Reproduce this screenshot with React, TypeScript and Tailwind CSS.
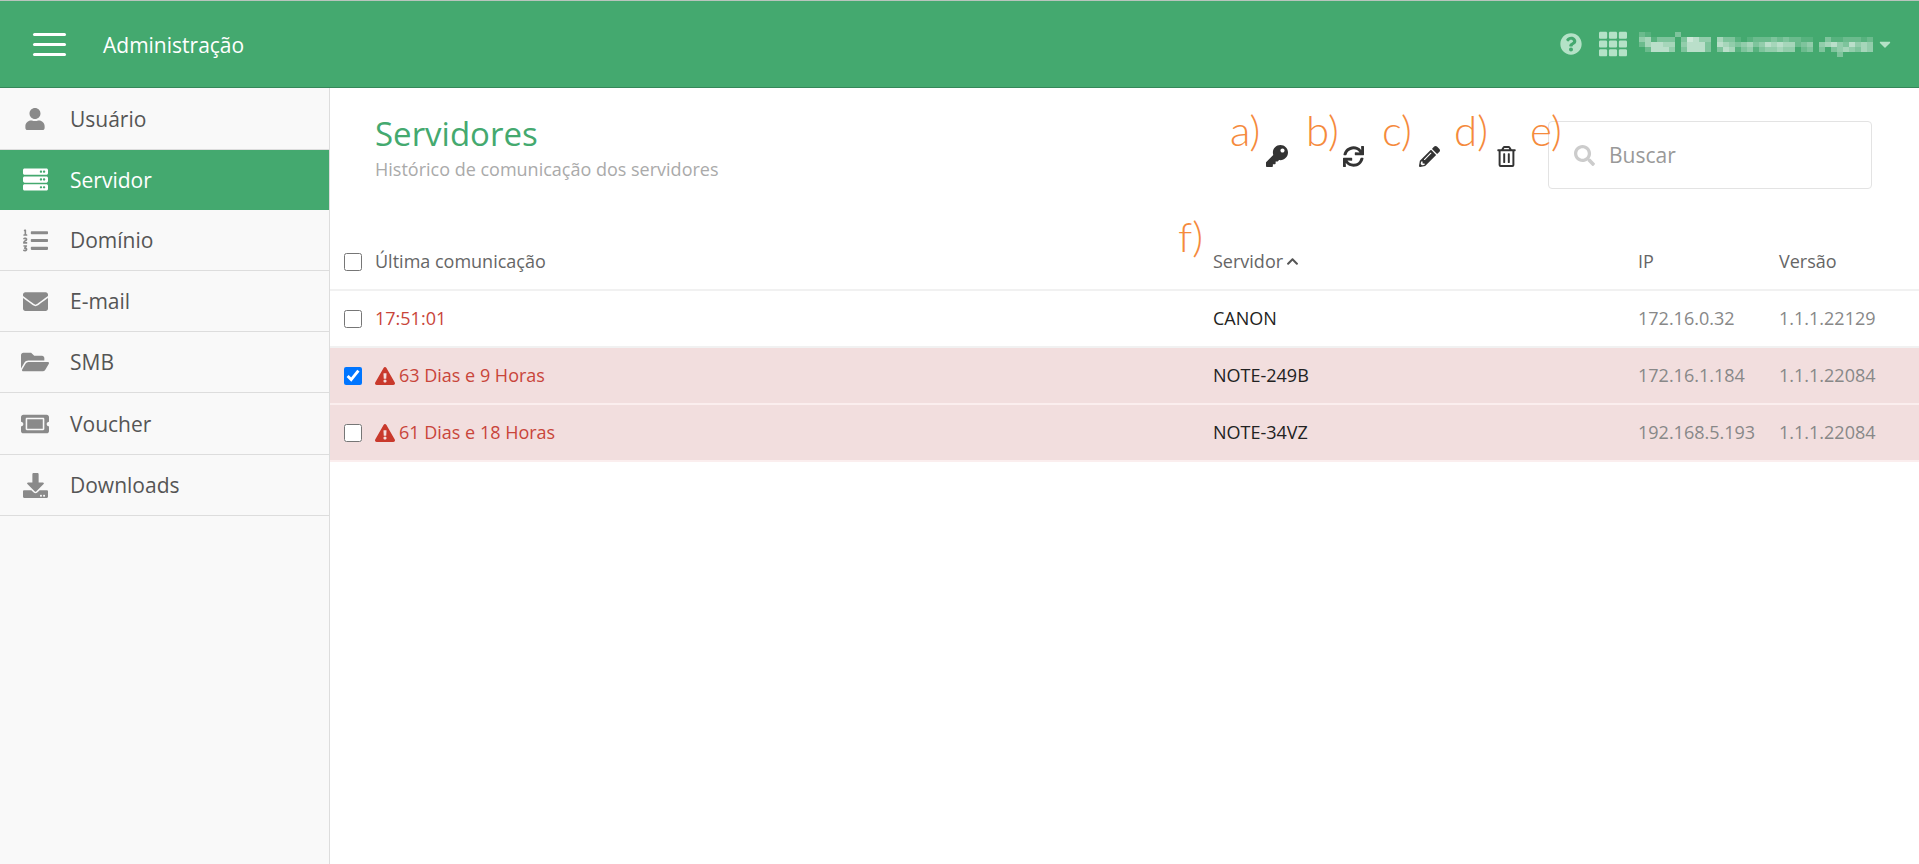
import React from "react";
import {
  FaUser, FaServer, FaListOl, FaEnvelope, FaFolderOpen, FaTicketAlt, FaDownload,
  FaKey, FaSync, FaPencilAlt, FaRegTrashAlt, FaSearch, FaQuestionCircle, FaTh,
  FaExclamationTriangle, FaChevronUp, FaCaretDown,
} from "react-icons/fa";

const nav = [
  { label: "Usuário", Icon: FaUser, h: "h-[62px]", size: 22 },
  { label: "Servidor", Icon: FaServer, h: "h-[60px]", active: true, size: 25 },
  { label: "Domínio", Icon: FaListOl, h: "h-[61px]", size: 25 },
  { label: "E-mail", Icon: FaEnvelope, h: "h-[61px]", size: 25 },
  { label: "SMB", Icon: FaFolderOpen, h: "h-[61px]", size: 28 },
  { label: "Voucher", Icon: FaTicketAlt, h: "h-[62px]", size: 28 },
  { label: "Downloads", Icon: FaDownload, h: "h-[61px]", size: 25 },
];

const rows = [
  { time: "17:51:01", server: "CANON", ip: "172.16.0.32", ver: "1.1.1.22129", alert: false, checked: false },
  { time: "63 Dias e 9 Horas", server: "NOTE-249B", ip: "172.16.1.184", ver: "1.1.1.22084", alert: true, checked: true },
  { time: "61 Dias e 18 Horas", server: "NOTE-34VZ", ip: "192.168.5.193", ver: "1.1.1.22084", alert: true, checked: false },
];

const notes = [
  { t: "a)", c: "left-[1230px] top-[106px]" },
  { t: "b)", c: "left-[1306px] top-[106px]" },
  { t: "c)", c: "left-[1382px] top-[106px]" },
  { t: "d)", c: "left-[1454px] top-[106px]" },
  { t: "e)", c: "left-[1530px] top-[106px]" },
  { t: "f)", c: "left-[1178px] top-[212px]" },
];

// Pixelated (censored) user name: one digit per mosaic cell, 0 = nothing.
const mosaic = [
  "210000300000000000000000000000000000000",
  "451333037644053310122232322110031122212",
  "256655046663065434534656552340456436454",
  "026664036663036513413445440230303454354",
  "000000000000000000000000000000000300000",
];

function Blurred() {
  return (
    <svg width="234" height="26" viewBox="0 0 234 26" className="block">
      {mosaic.map((row, y) =>
        row.split("").map((d, x) =>
          d === "0" ? null : (
            <rect key={`${x}-${y}`} x={x * 6} y={1 + y * 5} width="6" height="5" fill="#ffffff" opacity={Number(d) * 0.105} />
          )
        )
      )}
    </svg>
  );
}

export default function App() {
  return (
    <div className="relative flex h-[864px] w-[1919px] flex-col overflow-hidden bg-white font-['Open_Sans',sans-serif]">
      <header className="flex h-[88px] shrink-0 items-center border-t border-b border-t-[#b9c4bd] border-b-[#36875a] bg-[#44a96f] pl-[33px] pr-[25px] text-white">
        <div className="flex w-[33px] flex-col gap-[7px]">
          <span className="h-[3px] rounded-full bg-white" />
          <span className="h-[3px] rounded-full bg-white" />
          <span className="h-[3px] rounded-full bg-white" />
        </div>
        <span className="ml-[37px] pt-[4px] text-[21px]">Administração</span>
        <div className="ml-auto flex items-center text-[#b4e2c7]">
          <FaQuestionCircle size={22} />
          <FaTh size={28} className="ml-[17px]" />
          <div className="ml-[12px]"><Blurred /></div>
          <FaCaretDown size={18} className="ml-[3px]" />
        </div>
      </header>

      <div className="flex min-h-0 flex-1">
        <aside className="w-[330px] shrink-0 border-r border-[#dddddd] bg-[#f9f9f9]">
          {nav.map(({ label, Icon, h, active, size }) => (
            <div
              key={label}
              className={`flex items-center border-b text-[21px] ${h} ${
                active ? "border-[#44a96f] bg-[#44a96f] text-white" : "border-[#dddddd] text-[#555555]"
              }`}
            >
              <span className={`flex w-[70px] justify-center ${active ? "text-white" : "text-[#8a8a8a]"}`}>
                <Icon size={size} />
              </span>
              <span className="pt-[2px]">{label}</span>
            </div>
          ))}
        </aside>

        <main className="min-w-0 flex-1">
          <div className="flex h-[141px] items-start pl-[45px] pr-[47px]">
            <div className="pt-[24px]">
              <h1 className="text-[33px] leading-[44px] text-[#44a96f]">Servidores</h1>
              <p className="text-[18px] leading-[26px] text-[#aaaaaa]">Histórico de comunicação dos servidores</p>
            </div>
            <div className="ml-auto flex items-center pt-[33px] text-[#333333]">
              <FaKey size={22} className="mt-[2px]" />
              <FaSync size={21} className="ml-[55px] mt-[2px]" />
              <FaPencilAlt size={21} className="ml-[55px] mt-[2px]" />
              <FaRegTrashAlt size={21} className="ml-[56px] mt-[2px]" />
              <label className="ml-[31px] flex h-[68px] w-[324px] items-center rounded-[4px] border border-[#e3e3e3] bg-white pl-[25px]">
                <FaSearch size={21} className="text-[#cccccc]" />
                <input
                  placeholder="Buscar"
                  readOnly
                  className="ml-[14px] w-[220px] bg-transparent pt-[2px] text-[21px] text-[#333333] outline-none placeholder:text-[#999999]"
                />
              </label>
            </div>
          </div>

          <table className="w-full table-fixed border-collapse text-[18px]">
            <colgroup>
              <col className="w-[105px]" />
              <col />
              <col className="w-[425px]" />
              <col className="w-[141px]" />
              <col className="w-[140px]" />
            </colgroup>
            <thead>
              <tr className="h-[61px] border-b-2 border-[#f1f1f1] text-left text-[#666666]">
                <th colSpan={2} className="pl-[14px] pt-[5px] font-normal">
                  <div className="flex items-center gap-[13px]">
                    <input type="checkbox" readOnly className="h-[18px] w-[18px]" />
                    Última comunicação
                  </div>
                </th>
                <th className="pt-[5px] font-normal">
                  <span className="inline-flex items-center gap-[3px]">
                    Servidor <FaChevronUp size={13} className="text-[#555555]" />
                  </span>
                </th>
                <th className="pt-[5px] font-normal">IP</th>
                <th className="pt-[5px] font-normal">Versão</th>
              </tr>
            </thead>
            <tbody>
              {rows.map((r) => (
                <tr
                  key={r.server}
                  className={`h-[57px] border-b-2 ${r.alert ? "border-[#fbeeee] bg-[#f2dede]" : "border-[#f1f1f1]"}`}
                >
                  <td colSpan={2} className="pl-[14px]">
                    <div className="flex items-center text-[#c9453a]">
                      <input type="checkbox" checked={r.checked} readOnly className="h-[18px] w-[18px]" />
                      {r.alert ? (
                        <>
                          <FaExclamationTriangle size={20} className="ml-[13px] text-[#c9392c]" />
                          <span className="ml-[4px]">{r.time}</span>
                        </>
                      ) : (
                        <span className="ml-[13px]">{r.time}</span>
                      )}
                    </div>
                  </td>
                  <td className="text-[#222222]">{r.server}</td>
                  <td className="text-[#888888]">{r.ip}</td>
                  <td className="text-[#888888]">{r.ver}</td>
                </tr>
              ))}
            </tbody>
          </table>
        </main>
      </div>

      {notes.map((n) => (
        <span
          key={n.t}
          className={`pointer-events-none absolute font-['Lato',sans-serif] text-[42px] font-light leading-[48px] text-[#f58a3c] ${n.c}`}
        >
          {n.t}
        </span>
      ))}
    </div>
  );
}
